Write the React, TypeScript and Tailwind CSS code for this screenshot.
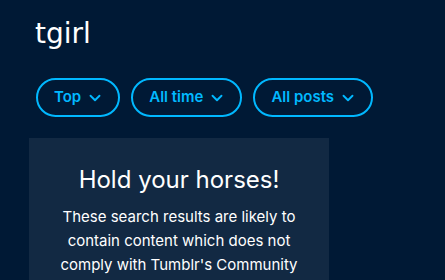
import { ChevronDown } from 'lucide-react';

const filters = ['Top', 'All time', 'All posts'];

function FilterButton({ label }: { label: string }) {
  return (
    <button className="flex h-[39px] items-center gap-[5px] rounded-full border-2 border-[#00b8ff] pl-[16px] pr-[14px] text-[15px] font-semibold text-[#00b8ff]">
      <span>{label}</span>
      <ChevronDown size={18} strokeWidth={2.5} />
    </button>
  );
}

export default function App() {
  return (
    <div
      className="h-[280px] w-[445px] overflow-hidden bg-[#001935] text-white"
      style={{ fontFamily: 'Inter, "Noto Sans", sans-serif' }}
    >
      <div className="pl-[35px] pt-[14px]">
        <h1 className="text-[28px] leading-[40px] font-normal" style={{ fontFamily: '"DejaVu Sans", sans-serif' }}>
          tgirl
        </h1>
      </div>
      <div className="mt-[24px] flex gap-[11px] pl-[36px]">
        {filters.map((f) => (
          <FilterButton key={f} label={f} />
        ))}
      </div>
      <div className="ml-[29px] mt-[21px] w-[300px] bg-[#122943] px-[20px] pt-[26px] pb-6 text-center">
        <h2 className="text-[24px] leading-[32px] font-normal">Hold your horses!</h2>
        <p className="mt-[9px] text-[15px] leading-[24px]">
          These search results are likely to contain content which does not comply with Tumblr's Community
          Guidelines.
        </p>
      </div>
    </div>
  );
}
